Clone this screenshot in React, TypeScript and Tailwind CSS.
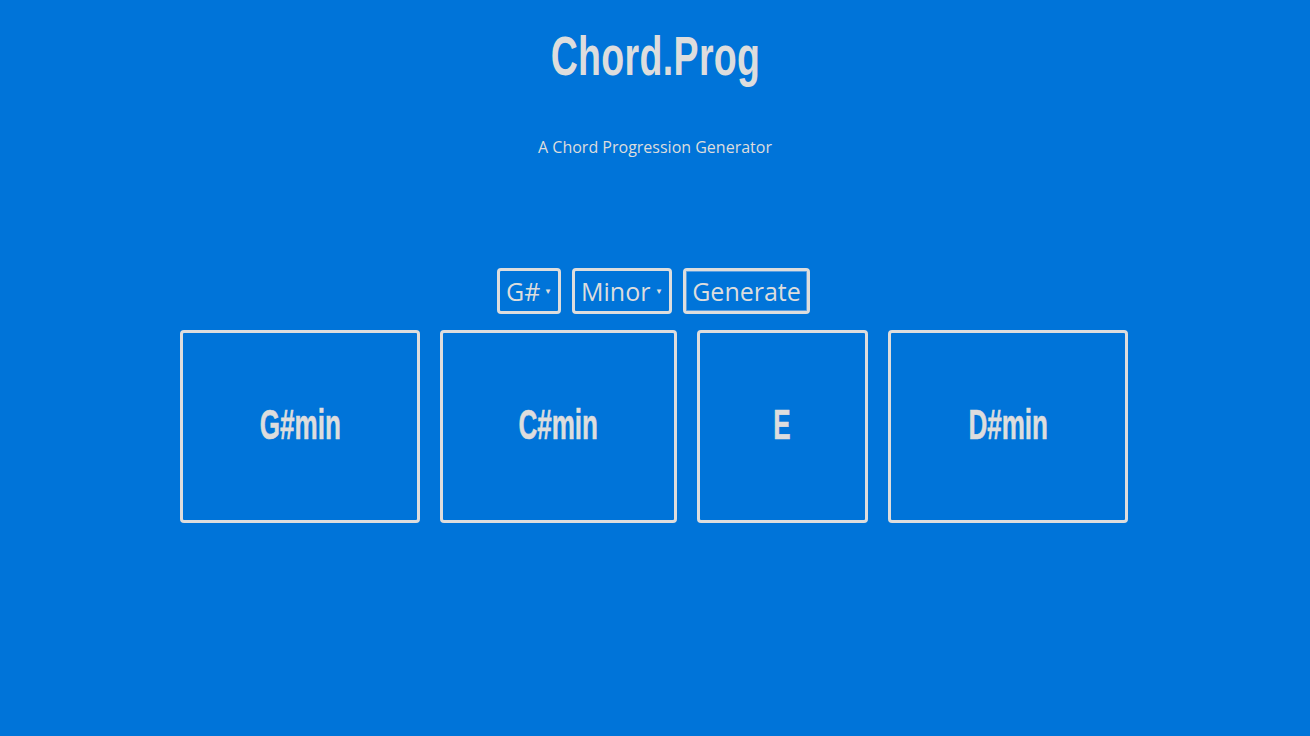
const CHORDS = [
  { name: "G#min", w: "w-[240px]" },
  { name: "C#min", w: "w-[237px]" },
  { name: "E", w: "w-[171px]" },
  { name: "D#min", w: "w-[240px]" },
];

const display = "inline-block font-['Liberation_Sans','Arial',sans-serif] font-bold";

function Select({ value, width }: { value: string; width: string }) {
  return (
    <div className={`flex h-[46px] ${width} items-center justify-between rounded-[4px] border-[3px] border-[#dddddd] pl-[6px] pr-[6px]`}>
      <span className="text-[25px] leading-none">{value}</span>
      <span className="text-[8px] leading-none">▼</span>
    </div>
  );
}

export default function App() {
  return (
    <div className="flex min-h-[736px] w-full flex-col items-center bg-[#0074d9] font-['Open_Sans','Noto_Sans',sans-serif] text-[#dddddd]">
      <h1 className="mt-[20px] h-[66px] text-[56px] leading-[66px]">
        <span className={`${display} scale-x-[0.67] tracking-[0.5px]`}>Chord.Prog</span>
      </h1>
      <p className="mt-[50px] text-[16px] leading-[22px]">A Chord Progression Generator</p>
      <div className="-ml-[3px] mt-[110px] flex items-center gap-[11px]">
        <Select value="G#" width="w-[64px]" />
        <Select value="Minor" width="w-[100px]" />
        <button className="h-[46px] w-[127px] rounded-[4px] border-[3px] border-[#dddddd] text-[25px] leading-none shadow-[inset_0_0_0_1px_#5a9ee0]">
          Generate
        </button>
      </div>
      <div className="-ml-[2px] mt-[16px] flex gap-[20px]">
        {CHORDS.map((c) => (
          <div
            key={c.name}
            className={`flex h-[193px] ${c.w} items-center justify-center rounded-[4px] border-[3px] border-[#dddddd] pb-[4px]`}
          >
            <span className={`${display} scale-x-[0.62] text-[42px] leading-none [-webkit-text-stroke:0.6px_#dddddd]`}>{c.name}</span>
          </div>
        ))}
      </div>
    </div>
  );
}
